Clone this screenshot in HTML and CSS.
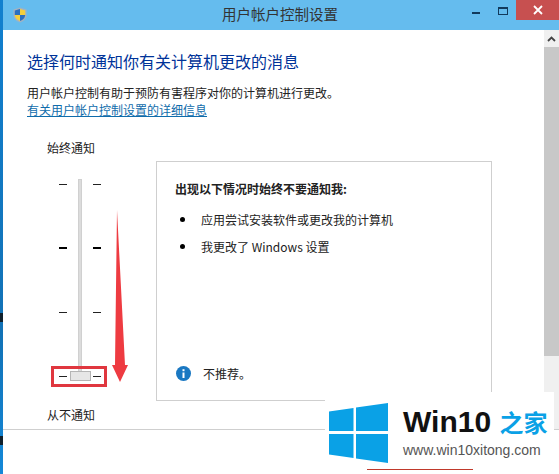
FILE: index.html
```html
<!DOCTYPE html>
<html lang="zh-CN">
<head>
  <meta charset="UTF-8" />
  <meta name="viewport" content="width=device-width, initial-scale=1" />
  <title>用户帐户控制设置</title>
  <link rel="stylesheet" href="styles.css">
</head>
<body>

<div class="window">
  <header class="titlebar">
    <svg class="shield" width="14" height="16" viewBox="0 0 14 16">
      <path d="M7 .5 13.500 2.500V8C13.500 12 10 14.500 7 15.500 4 14.500 .5 12 .5 8V2.500Z" fill="#a3b2c0"/>
      <path d="M7 2 7 8H1.800V3.400Z" fill="#2a6fc0"/>
      <path d="M7 2 12.200 3.400V8H7Z" fill="#f4cf3c"/>
      <path d="M1.800 8H7V14C4 13 2 11 1.800 8Z" fill="#f4cf3c"/>
      <path d="M7 8H12.200C12 11 10 13 7 14Z" fill="#2a6fc0"/>
    </svg>
    <div class="title">用户帐户控制设置</div>
    <div class="controls">
      <span class="min"></span>
      <span class="max"></span>
      <span class="close">
        <svg width="10" height="10" viewBox="0 0 10 10"><path d="M1 1 9 9M9 1 1 9" stroke="#fff" stroke-width="1.800"/></svg>
      </span>
    </div>
  </header>

  <div class="body">
    <main class="content">
      <h1>选择何时通知你有关计算机更改的消息</h1>
      <p class="intro">用户帐户控制有助于预防有害程序对你的计算机进行更改。</p>
      <a class="more" href="#">有关用户帐户控制设置的详细信息</a>

      <div class="settings">
        <div class="level">
          <div class="lbl">始终通知</div>
          <div class="slider">
            <div class="track"></div>
            <div class="tick"><i></i><i></i></div>
            <div class="tick bold"><i></i><i></i></div>
            <div class="tick"><i></i><i></i></div>
            <div class="tick last"><i></i><b class="thumb"></b><i></i></div>
          </div>
          <div class="lbl">从不通知</div>
        </div>

        <section class="panel">
          <h2>出现以下情况时始终不要通知我:</h2>
          <ul>
            <li>应用尝试安装软件或更改我的计算机</li>
            <li>我更改了 Windows 设置</li>
          </ul>
          <div class="note">
            <svg width="15" height="15" viewBox="0 0 15 15">
              <circle cx="7.500" cy="7.500" r="7.500" fill="#1a78c2"/>
              <rect x="6.500" y="6.500" width="2" height="5.500" fill="#fff"/>
              <rect x="6.500" y="3.200" width="2" height="2" fill="#fff"/>
            </svg>
            <span>不推荐。</span>
          </div>
        </section>
      </div>
      <div class="rule"></div>
    </main>

    <div class="scrollbar">
      <div class="arrow">
        <svg width="9" height="6" viewBox="0 0 9 6"><path d="M1 5 4.500 1.500 8 5" fill="none" stroke="#444" stroke-width="1.800"/></svg>
      </div>
      <div class="scroll-thumb"></div>
    </div>
  </div>
</div>

<!-- 桌面露出的部分 -->
<span class="spot spot-a"></span>
<span class="spot spot-b"></span>

<!-- 标注 -->
<div class="redbox"></div>
<svg class="redarrow" width="16" height="172" viewBox="0 0 16 172">
  <path d="M5 0 13 155H16L8 172 0 155H3Z" fill="#ee3b41"/>
</svg>

<!-- 水印 -->
<div class="badge">
  <svg width="60" height="60" viewBox="0 0 60 60">
    <path d="M0 8.500 24.500 5V28H0ZM27 4.500 59 0V28H27ZM0 31H24.500V55L0 51.500ZM27 31H59V60L27 55.500Z" fill="#0aa1e6"/>
  </svg>
  <div class="brand">
    <div class="brand-top">Win10 <span>之家</span></div>
    <div class="brand-url">www.win10xitong.com</div>
  </div>
  <div class="badge-line"></div>
</div>

</body>
</html>
```

FILE: styles.css
```css
/* Reset */
* {
  margin: 0; padding: 0; box-sizing: border-box;
}

body {
  width: 559px;
  height: 474px;
  overflow: hidden;
  position: relative;
  background: #fff;
  color: #222;
  font-family: "Noto Sans CJK SC", "Liberation Sans", sans-serif;
  font-size: 12px;
}

.window {
  height: 474px;
  border-left: 3px solid;
  border-image: linear-gradient(#1180cf, #1272b6 70%, #1488d8) 1;
  display: flex;
  flex-direction: column;
}

/* Title bar */
.titlebar {
  height: 30px;
  background: #65bcee;
  display: flex;
  align-items: flex-start;
  flex-shrink: 0;
}

.shield {
  margin: 7px 0 0 10px;
}

.title {
  flex: 1;
  text-align: center;
  font-size: 14.5px;
  line-height: 28px;
  color: #333;
  padding-left: 61px;
}

.controls {
  display: flex;
  align-items: flex-start;
}

.min {
  width: 8px;
  height: 2px;
  margin: 12px 0 0;
  background: #123a5c;
}

.max {
  width: 10px;
  height: 8px;
  margin: 7px 8px 0 18px;
  border: 1px solid #123a5c;
  border-top-width: 2px;
}

.close {
  width: 43px;
  height: 20px;
  background: #c75050;
  display: flex;
  align-items: center;
  justify-content: center;
}

/* Body */
.body {
  flex: 1;
  display: flex;
  min-height: 0;
}

.content {
  flex: 1;
  padding-top: 20px;
}

h1 {
  font-size: 16px;
  font-weight: 400;
  line-height: 22px;
  color: #003399;
  margin-left: 24px;
}

.intro {
  margin: 12px 0 0 24px;
  line-height: 17px;
}

.more {
  display: block;
  margin-left: 24px;
  line-height: 17px;
  color: #0f6cab;
}

.settings {
  display: flex;
  margin-top: 21px;
}

.level {
  width: 153px;
  flex-shrink: 0;
}

.lbl {
  margin-left: 44px;
  line-height: 17px;
}

.slider {
  position: relative;
  width: 72px;
  margin: 18px 0 19px 39px;
  height: 213px;
}

.track {
  position: absolute;
  left: 36px;
  top: 5px;
  width: 4px;
  height: 193px;
  background: #dcdcdc;
  border: 1px solid #d0d0d0;
}

.tick {
  display: flex;
  justify-content: space-between;
  align-items: center;
  padding: 0 13px 0 17px;
  height: 20px;
  margin-bottom: 44px;
  position: relative;
}

.tick.last {
  margin-bottom: 0;
}

.tick i {
  display: block;
  width: 8px;
  height: 1px;
  background: #222;
}

.tick.bold i {
  height: 2px;
  background: #000;
}

.thumb {
  display: block;
  width: 21px;
  height: 10px;
  background: #e6e6e6;
  border: 1px solid #b5b5b5;
}

/* Right panel */
.panel {
  width: 336px;
  height: 240px;
  margin-top: 22px;
  border: 1px solid #cfcfcf;
  padding: 18px 0 0 18px;
  display: flex;
  flex-direction: column;
}

h2 {
  font-size: 12px;
  font-weight: 700;
  line-height: 17px;
}

ul {
  list-style: none;
  margin-top: 14px;
}

li {
  line-height: 17px;
  padding-left: 26px;
  margin-bottom: 10px;
  position: relative;
}

li::before {
  content: "";
  position: absolute;
  left: 5px;
  top: 6px;
  width: 5px;
  height: 5px;
  border-radius: 50%;
  background: #000;
}

.note {
  margin: auto 0 18px 1px;
  display: flex;
  align-items: center;
  gap: 12px;
}

.rule {
  height: 1px;
  background: #cfcfcf;
  margin-top: 6px;
}

/* Scrollbar */
.scrollbar {
  width: 15px;
  height: 400px;
  flex-shrink: 0;
  background: #f0f0f0;
  border-bottom: 1px solid #cfcfcf;
}

.arrow {
  height: 17px;
  display: flex;
  align-items: center;
  justify-content: center;
}

.scroll-thumb {
  height: 309px;
  background: #c8c8c8;
}

/* Desktop showing through the window edge */
.spot {
  position: absolute;
  left: 0;
  width: 3px;
  height: 9px;
  background: #10202c;
}

.spot-a { top: 313px; }
.spot-b { top: 436px; }

/* Annotation */
.redbox {
  position: absolute;
  left: 51px;
  top: 366px;
  width: 56px;
  height: 21px;
  border: 3px solid #e0373f;
}

.redarrow {
  position: absolute;
  left: 112px;
  top: 210px;
}

/* Watermark */
.badge {
  position: absolute;
  left: 325px;
  top: 392px;
  width: 229px;
  height: 82px;
  background: #fff;
  display: flex;
  align-items: flex-start;
  gap: 14px;
  padding: 11px 0 0 4px;
}

.brand-top {
  font-family: "Liberation Sans", sans-serif;
  font-size: 30px;
  font-weight: 700;
  line-height: 32px;
  color: #111;
  white-space: nowrap;
  margin-top: 3px;
}

.brand-top span {
  font-family: "Noto Sans CJK SC", sans-serif;
  font-size: 24px;
  color: #0aa1e6;
}

.brand-url {
  font-family: "Liberation Sans", sans-serif;
  font-size: 14px;
  color: #555;
  margin-top: 4px;
}

.badge-line {
  position: absolute;
  left: 42px;
  top: 77px;
  width: 106px;
  height: 1px;
  background: #c0392b;
}
```
